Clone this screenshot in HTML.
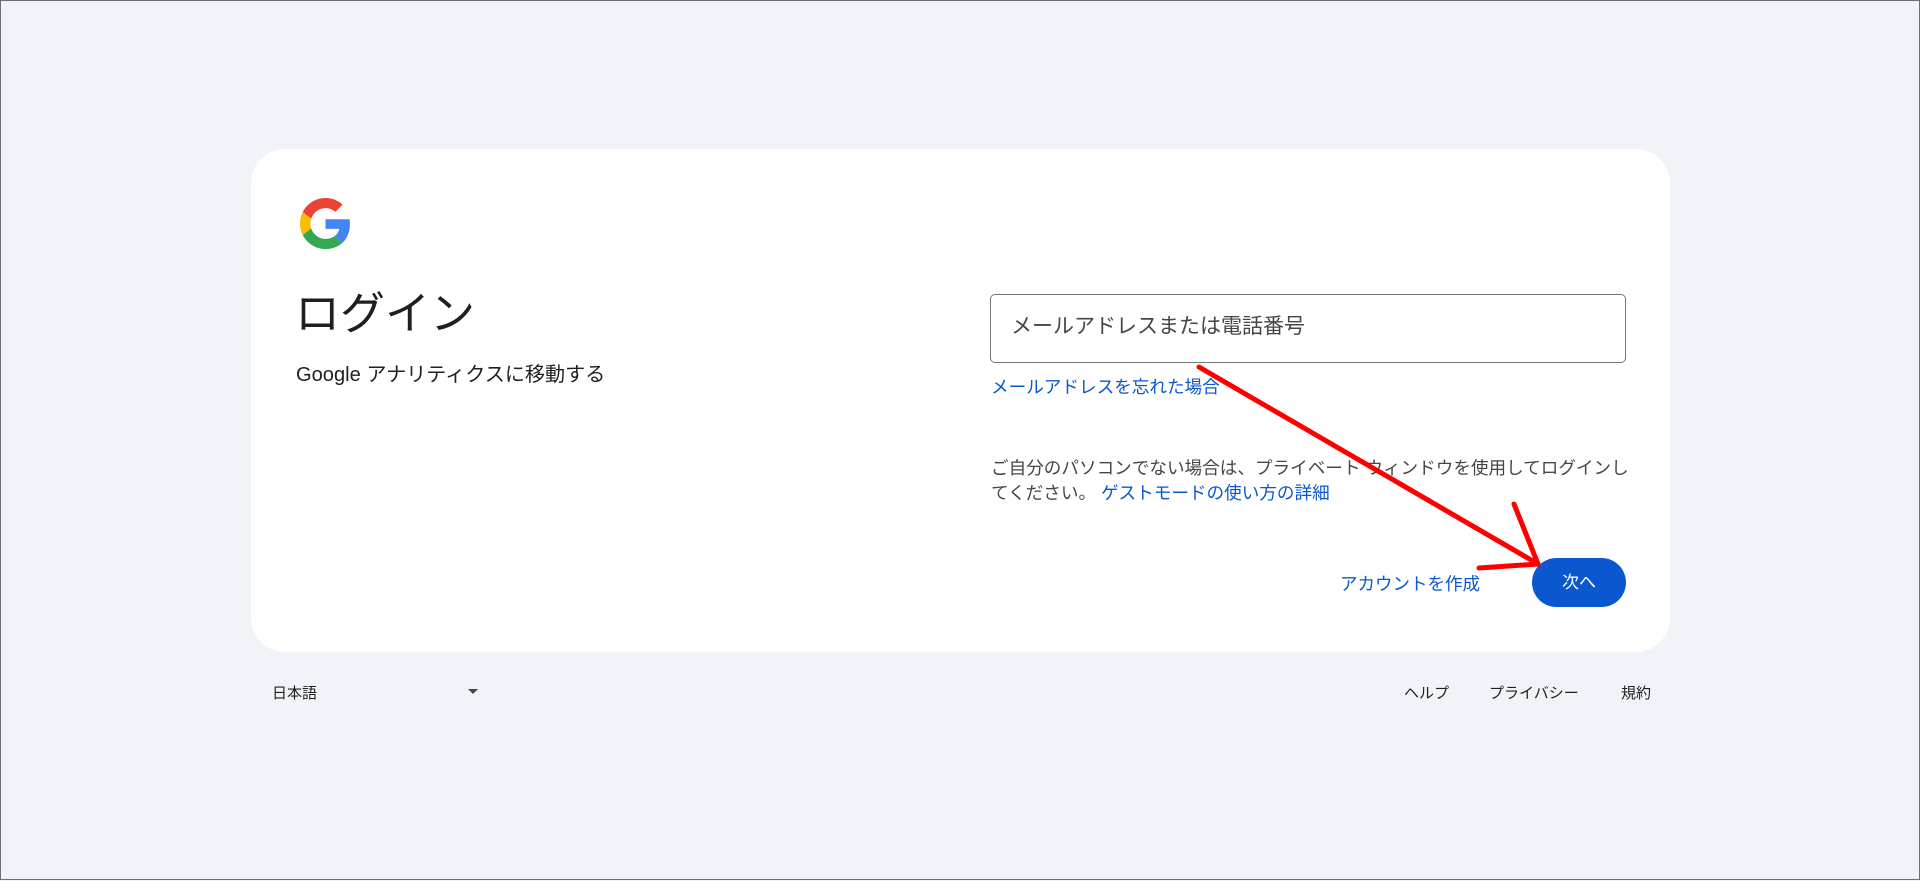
<!DOCTYPE html>
<html><head><meta charset="utf-8"><style>
html,body{margin:0;padding:0;}
body{width:1918px;height:878px;background:#f0f4f9;border:1px solid #6b6f75;position:relative;overflow:hidden;font-family:"Liberation Sans","Noto Sans CJK JP",sans-serif;color:#1f1f1f;}
.card{position:absolute;left:250px;top:148px;width:1419px;height:503px;background:#fff;border-radius:34px;}
.abs{position:absolute;white-space:nowrap;}
.link{color:#0b57d0;}
</style></head><body>
<div class="card"></div>
<svg class="abs" style="left:299px;top:197px" width="51" height="51" viewBox="0 0 48 48">
<path fill="#EA4335" d="M24 9.5c3.54 0 6.71 1.22 9.21 3.6l6.850-6.85C35.9 2.38 30.47 0 24 0 14.62 0 6.51 5.38 2.56 13.22l7.98 6.19C12.43 13.720 17.74 9.5 24 9.5z"/>
<path fill="#4285F4" d="M46.98 24.55c0-1.570-.15-3.09-.38-4.55H24v9.02h12.94c-.58 2.96-2.26 5.48-4.78 7.18l7.73 6c4.51-4.18 7.09-10.36 7.09-17.65z"/>
<path fill="#FBBC05" d="M10.53 28.59c-.48-1.45-.76-2.99-.76-4.59s.27-3.14.76-4.59l-7.98-6.19C.92 16.46 0 20.12 0 24c0 3.88.92 7.54 2.56 10.78l7.97-6.19z"/>
<path fill="#34A853" d="M24 48c6.48 0 11.93-2.13 15.89-5.81l-7.73-6c-2.15 1.45-4.920 2.3-8.16 2.3-6.26 0-11.57-4.22-13.47-9.91l-7.98 6.19C6.51 42.62 14.62 48 24 48z"/>
</svg>
<div class="abs" style="left:294px;top:276px;font-size:45px;">ログイン</div>
<div class="abs" style="left:295px;top:357px;font-size:20.1px;">Google アナリティクスに移動する</div>
<div class="abs" style="left:989px;top:293px;width:634px;height:67px;border:1px solid #747775;border-radius:5px;"></div>
<div class="abs" style="left:1010px;top:309px;font-size:21px;color:#444746;">メールアドレスまたは電話番号</div>
<div class="abs link" style="left:990px;top:373px;font-size:17.6px;">メールアドレスを忘れた場合</div>
<div class="abs" style="left:990px;top:455px;font-size:17.6px;line-height:25px;color:#444746;white-space:normal;width:642px;">ご自分のパソコンでない場合は、プライベート ウィンドウを使用してログインしてください。 <span class="link">ゲストモードの使い方の詳細</span></div>
<div class="abs link" style="left:1339px;top:570px;font-size:17.5px;">アカウントを作成</div>
<div class="abs" style="left:1531px;top:557px;width:94px;height:49px;border-radius:25px;background:#0b57d0;color:#fff;font-size:17px;line-height:49px;text-align:center;">次へ</div>
<div class="abs" style="left:271px;top:681px;font-size:15px;">日本語</div>
<div class="abs" style="left:467px;top:688px;width:0;height:0;border-left:5px solid transparent;border-right:5px solid transparent;border-top:5px solid #444;"></div>
<div class="abs" style="left:1403px;top:681px;font-size:15px;">ヘルプ</div>
<div class="abs" style="left:1488px;top:681px;font-size:15px;">プライバシー</div>
<div class="abs" style="left:1620px;top:681px;font-size:15px;">規約</div>
<svg class="abs" style="left:0;top:0" width="1920" height="880">
<g stroke="#f00" stroke-width="5" stroke-linecap="round" fill="none">
<line x1="1198" y1="366" x2="1537" y2="563"/>
<line x1="1513" y1="503" x2="1537" y2="563"/>
<line x1="1478" y1="567" x2="1537" y2="563"/>
</g></svg>
</body></html>
